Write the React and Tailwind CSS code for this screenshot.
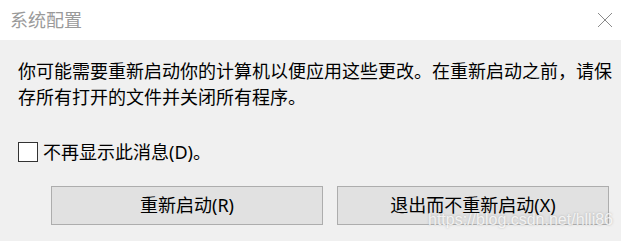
import React from 'react';

const App = () => {
  return (
    <div className="relative w-[621px] h-[241px] overflow-hidden bg-[#f0f0f0] font-['Noto_Sans','Noto_Sans_CJK_SC',sans-serif]">
      {/* title bar */}
      <div className="h-[40px] bg-white flex items-center justify-between">
        <span className="pl-[10px] text-[18px] leading-none text-[#9a9a9a]">系统配置</span>
        <svg width="16" height="16" viewBox="0 0 16 16" className="mr-[8px]">
          <path d="M1 1L15 15M15 1L1 15" stroke="#8a8a8a" strokeWidth="1" fill="none" />
        </svg>
      </div>

      <div className="pl-[18px] pt-[18px]">
        <p className="w-[600px] text-[18px] leading-[26px] text-black">
          你可能需要重新启动你的计算机以便应用这些更改。在重新启动之前，请保存所有打开的文件并关闭所有程序。
        </p>

        <label className="mt-[32px] flex items-center h-[20px]">
          <span className="w-[20px] h-[20px] border border-[#333] bg-white" />
          <span className="ml-[5px] text-[18px] leading-none text-black">不再显示此消息(D)。</span>
        </label>

        <div className="mt-[24px] pl-[33px] flex gap-[14px]">
          <button className="shrink-0 w-[272px] h-[39px] bg-[#e1e1e1] border border-[#adadad] text-[18px] text-black">
            重新启动(R)
          </button>
          <button className="shrink-0 w-[272px] h-[39px] bg-[#e1e1e1] border border-[#adadad] text-[18px] text-black">
            退出而不重新启动(X)
          </button>
        </div>
      </div>

      {/* watermark */}
      <span className="absolute left-[428px] top-[212px] text-[16px] leading-none text-white/80 font-['Liberation_Sans',sans-serif] [text-shadow:0_0_2px_rgba(120,120,120,0.5)]">
        https://blog.csdn.net/hlli86
      </span>
    </div>
  );
};

export default App;
